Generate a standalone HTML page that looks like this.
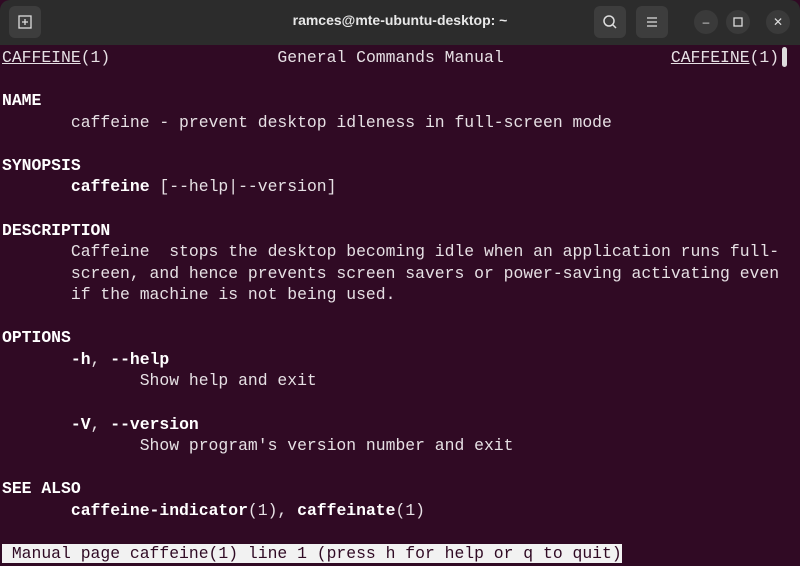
<!DOCTYPE html>
<html><head><meta charset="utf-8"><style>
html,body{margin:0;padding:0;width:800px;height:566px;overflow:hidden;background:#300a24}
.tb{position:absolute;left:0;top:0;width:800px;height:45px;background:#2c2c2c;border-radius:10px 10px 0 0}
.title{position:absolute;left:0;width:800px;top:12px;text-align:center;color:#e8e8e8;font:bold 14px "Liberation Sans",sans-serif}
.btn{position:absolute;top:6px;width:32px;height:32px;background:#3d3d3d;border-radius:6px}
.rb{position:absolute;top:10px;width:24px;height:24px;background:#3a3a3a;border-radius:50%;color:#ddd;font:12px "Liberation Sans",sans-serif;text-align:center;line-height:24px}
.term{position:absolute;left:2px;top:47px;font:16.4px/21.57px "Liberation Mono",monospace;color:#e6e0e4;white-space:pre}
b{color:#fff}
u{text-decoration:underline}
.st{background:#f2f2f2;color:#300a24}
.sb{position:absolute;left:782px;top:47px;width:5px;height:20px;background:#ddd;border-radius:3px}
</style></head><body>
<div class="tb">
<div class="btn" style="left:9px"><svg width="32" height="32"><rect x="10" y="10" width="12" height="12" fill="none" stroke="#ddd" stroke-width="1.3"/><path d="M16 13v6M13 16h6" stroke="#ddd" stroke-width="1.3"/></svg></div>
<div class="title">ramces@mte-ubuntu-desktop: ~</div>
<div class="btn" style="left:594px"><svg width="32" height="32"><circle cx="15" cy="15" r="5" fill="none" stroke="#ddd" stroke-width="1.5"/><path d="M18.5 18.5l3.5 3.5" stroke="#ddd" stroke-width="1.5"/></svg></div>
<div class="btn" style="left:636px"><svg width="32" height="32"><path d="M11 12h10M11 16h10M11 20h10" stroke="#ddd" stroke-width="1.3"/></svg></div>
<div class="rb" style="left:694px">–</div>
<div class="rb" style="left:726px"><svg width="24" height="24"><rect x="8" y="8" width="8" height="8" fill="none" stroke="#ddd" stroke-width="1.3"/></svg></div>
<div class="rb" style="left:766px">✕</div>
</div>
<div class="sb"></div>
<div class="term"><u>CAFFEINE</u>(1)                 General Commands Manual                 <u>CAFFEINE</u>(1)

<b>NAME</b>
       caffeine - prevent desktop idleness in full-screen mode

<b>SYNOPSIS</b>
       <b>caffeine</b> [--help|--version]

<b>DESCRIPTION</b>
       Caffeine  stops the desktop becoming idle when an application runs full-
       screen, and hence prevents screen savers or power-saving activating even
       if the machine is not being used.

<b>OPTIONS</b>
       <b>-h</b>, <b>--help</b>
              Show help and exit

       <b>-V</b>, <b>--version</b>
              Show program's version number and exit

<b>SEE ALSO</b>
       <b>caffeine-indicator</b>(1), <b>caffeinate</b>(1)

<span class="st"> Manual page caffeine(1) line 1 (press h for help or q to quit)</span></div>
</body></html>
